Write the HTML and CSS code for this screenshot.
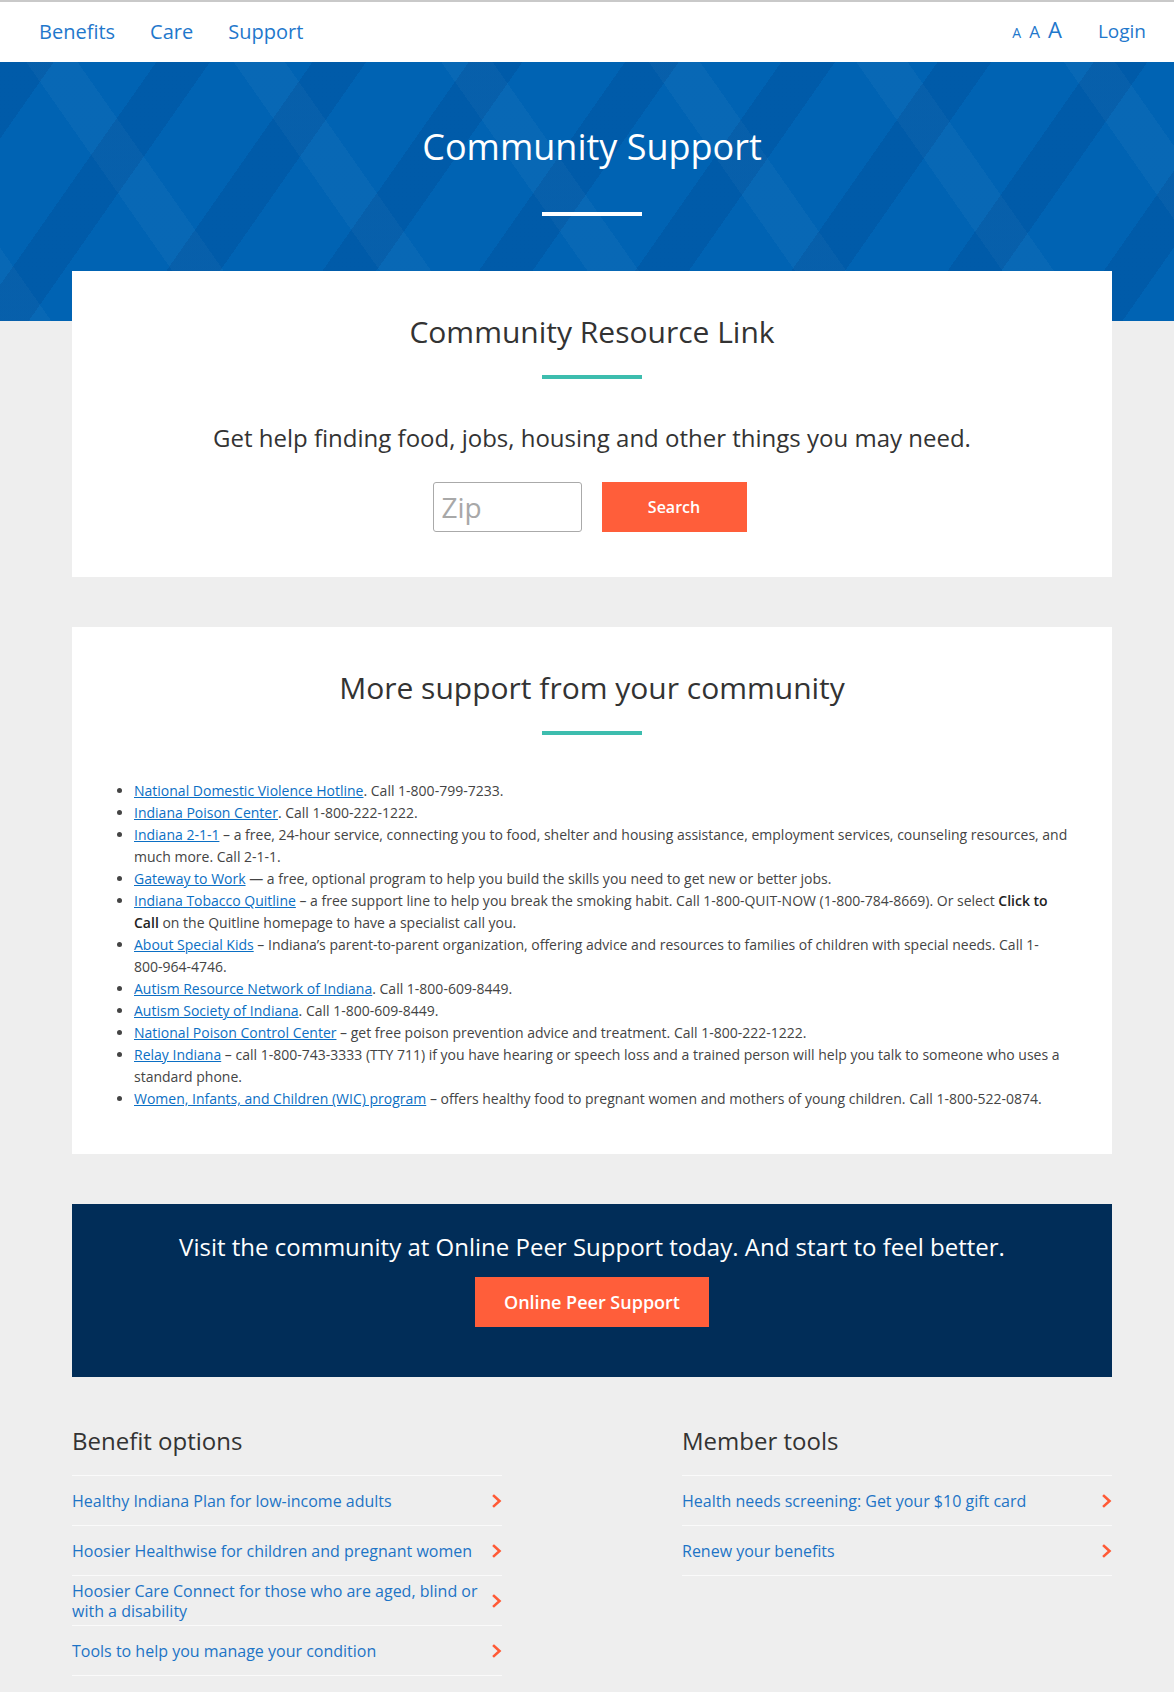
FILE: index.html
```html
<!DOCTYPE html>
<html lang="en">
<head>
<meta charset="utf-8">
<title>Community Support</title>
<link rel="stylesheet" href="styles.css">
</head>
<body>
<header class="topbar">
  <nav class="mainnav">
    <a href="#">Benefits</a>
    <a href="#">Care</a>
    <a href="#">Support</a>
  </nav>
  <div class="util">
    <span class="sizes">
      <a href="#" class="sz sz1">A</a>
      <a href="#" class="sz sz2">A</a>
      <a href="#" class="sz sz3">A</a>
    </span>
    <a href="#" class="login">Login</a>
  </div>
</header>

<section class="hero">
  <div class="wrap hero-inner">
    <h1>Community Support</h1>
    <div class="rule rule-white"></div>
  </div>
</section>

<main class="wrap">
  <section class="card card-first">
    <h2>Community Resource Link</h2>
    <div class="rule rule-teal"></div>
    <p class="lead">Get help finding food, jobs, housing and other things you may need.</p>
    <form class="search">
      <input type="text" class="zip" placeholder="Zip">
      <button type="button" class="btn btn-search">Search</button>
    </form>
  </section>

  <section class="card card-list">
    <h2>More support from your community</h2>
    <div class="rule rule-teal"></div>
    <ul class="resources">
      <li><a href="#">National Domestic Violence Hotline</a>. Call 1-800-799-7233.</li>
      <li><a href="#">Indiana Poison Center</a>. Call 1-800-222-1222.</li>
      <li><a href="#">Indiana 2-1-1</a> – a free, 24-hour service, connecting you to food, shelter and housing assistance, employment services, counseling resources, and much more. Call 2-1-1.</li>
      <li><a href="#">Gateway to Work</a> — a free, optional program to help you build the skills you need to get new or better jobs.</li>
      <li><a href="#">Indiana Tobacco Quitline</a> – a free support line to help you break the smoking habit. Call 1-800-QUIT-NOW (1-800-784-8669). Or select <strong>Click to Call</strong> on the Quitline homepage to have a specialist call you.</li>
      <li><a href="#">About Special Kids</a> – Indiana’s parent-to-parent organization, offering advice and resources to families of children with special needs. Call 1-<wbr><span class="nowrap">800-964-4746.</span></li>
      <li><a href="#">Autism Resource Network of Indiana</a>. Call 1-800-609-8449.</li>
      <li><a href="#">Autism Society of Indiana</a>. Call 1-800-609-8449.</li>
      <li><a href="#">National Poison Control Center</a> – get free poison prevention advice and treatment. Call 1-800-222-1222.</li>
      <li><a href="#">Relay Indiana</a> – call 1-800-743-3333 (TTY 711) if you have hearing or speech loss and a trained person will help you talk to someone who uses a standard phone.</li>
      <li><a href="#">Women, Infants, and Children (WIC) program</a> – offers healthy food to pregnant women and mothers of young children. Call 1-800-522-0874.</li>
    </ul>
  </section>

  <section class="promo">
    <h3>Visit the community at Online Peer Support today. And start to feel better.</h3>
    <a href="#" class="btn btn-promo">Online Peer Support</a>
  </section>

  <section class="linkcols">
    <div class="col">
      <h3>Benefit options</h3>
      <ul class="linklist">
        <li><a href="#"><span>Healthy Indiana Plan for low-income adults</span><svg class="chev" viewBox="0 0 10 14" width="10" height="14"><path d="M2 2 L7.5 7 L2 12"/></svg></a></li>
        <li><a href="#"><span>Hoosier Healthwise for children and pregnant women</span><svg class="chev" viewBox="0 0 10 14" width="10" height="14"><path d="M2 2 L7.5 7 L2 12"/></svg></a></li>
        <li><a href="#"><span>Hoosier Care Connect for those who are aged, blind or with a disability</span><svg class="chev" viewBox="0 0 10 14" width="10" height="14"><path d="M2 2 L7.5 7 L2 12"/></svg></a></li>
        <li><a href="#"><span>Tools to help you manage your condition</span><svg class="chev" viewBox="0 0 10 14" width="10" height="14"><path d="M2 2 L7.5 7 L2 12"/></svg></a></li>
      </ul>
    </div>
    <div class="col">
      <h3>Member tools</h3>
      <ul class="linklist">
        <li><a href="#"><span>Health needs screening: Get your $10 gift card</span><svg class="chev" viewBox="0 0 10 14" width="10" height="14"><path d="M2 2 L7.5 7 L2 12"/></svg></a></li>
        <li><a href="#"><span>Renew your benefits</span><svg class="chev" viewBox="0 0 10 14" width="10" height="14"><path d="M2 2 L7.5 7 L2 12"/></svg></a></li>
      </ul>
    </div>
  </section>
</main>
</body>
</html>
```

FILE: styles.css
```css
* { box-sizing: border-box; }

body {
  margin: 0;
  background: #eeeeee;
  font-family: "Open Sans", "Noto Sans", Arial, sans-serif;
  color: #333;
}

a { color: #0b6fc4; }

.wrap {
  width: 1040px;
  margin: 0 62px 0 72px;
}

.nowrap { white-space: nowrap; }

/* ---------- top bar ---------- */
.topbar {
  height: 62px;
  background: #fff;
  border-top: 2px solid #c9c9c9;
  display: flex;
  align-items: center;
  justify-content: space-between;
  padding: 0 28px 2px 39px;
}

.mainnav {
  display: flex;
  gap: 35px;
}

.mainnav a,
.util a {
  text-decoration: none;
  color: #1f78cc;
  font-size: 20px;
  line-height: 27px;
}

.util {
  display: flex;
  align-items: baseline;
  gap: 36px;
}

.sizes {
  display: flex;
  align-items: baseline;
  gap: 8px;
}

.util .sz1 { font-size: 14px; }
.util .sz2 { font-size: 17px; }
.util .sz3 { font-size: 22px; }
.util .login { font-size: 19px; }

/* ---------- hero ---------- */
.hero {
  height: 259px;
  background-color: #0063b3;
  background-image:
    repeating-linear-gradient(125deg, rgba(0, 20, 80, 0.10) 0 44px, rgba(0, 0, 0, 0) 44px 128px),
    repeating-linear-gradient(55deg, rgba(255, 255, 255, 0.03) 0 42px, rgba(0, 0, 0, 0) 42px 170px);
  padding-top: 60px;
}

.hero-inner {
  text-align: center;
}

.hero h1 {
  margin: 0;
  font-size: 36px;
  line-height: 49px;
  font-weight: 400;
  color: #fff;
}

.rule {
  width: 100px;
  height: 4px;
  margin: 0 auto;
}

.rule-white {
  background: #fff;
  margin-top: 41px;
}

.rule-teal {
  background: #3dbdae;
  margin-top: 23px;
}

/* ---------- cards ---------- */
.card {
  background: #fff;
  text-align: center;
  padding: 40px 40px 45px;
}

.card-first {
  margin-top: -50px;
}

.card-list {
  margin-top: 50px;
  padding-bottom: 44px;
}

.card h2 {
  margin: 0;
  font-size: 30px;
  line-height: 41px;
  font-weight: 400;
  color: #333;
}

.lead {
  margin: 42px 0 0;
  font-size: 24px;
  line-height: 33px;
  color: #333;
}

.search {
  margin-top: 28px;
  display: flex;
  justify-content: center;
  gap: 20px;
  padding-right: 5px;
}

.zip {
  width: 149px;
  height: 50px;
  border: 1px solid #aaaaaa;
  border-radius: 3px;
  padding: 0 8px;
  font-family: inherit;
  font-size: 28px;
  color: #333;
  background: #fff;
}

.zip::placeholder { color: #a8a8a8; }

.btn {
  display: inline-flex;
  align-items: center;
  justify-content: center;
  height: 50px;
  background: #ff5e3a;
  color: #fff;
  border: 0;
  font-family: inherit;
  font-weight: 600;
  text-decoration: none;
}

.btn-search {
  width: 145px;
  font-size: 16px;
}

/* ---------- resource list ---------- */
.resources {
  text-align: left;
  margin: 45px 0 0;
  padding: 0 0 0 22px;
  font-size: 14px;
  line-height: 22px;
  color: #444;
}

.resources a { color: #0b6fc4; }
.resources strong { color: #222; font-weight: 600; }

/* ---------- promo ---------- */
.promo {
  margin-top: 50px;
  background: #012d58;
  text-align: center;
  padding: 27px 0 50px;
}

.promo h3 {
  margin: 0 0 14px;
  font-size: 24px;
  line-height: 32px;
  font-weight: 400;
  color: #fff;
}

.btn-promo {
  padding: 0 29px;
  font-size: 18px;
}

/* ---------- bottom link columns ---------- */
.linkcols {
  display: grid;
  grid-template-columns: 430px 430px;
  column-gap: 180px;
  padding-top: 48px;
  padding-bottom: 16px;
}

.col h3 {
  margin: 0 0 18px;
  font-size: 24px;
  line-height: 32px;
  font-weight: 400;
  color: #333;
}

.linklist {
  list-style: none;
  margin: 0;
  padding: 0;
  border-bottom: 1px solid #fafafa;
}

.linklist li {
  border-top: 1px solid #fafafa;
}

.linklist a {
  display: flex;
  align-items: center;
  justify-content: space-between;
  min-height: 49px;
  gap: 6px;
  text-decoration: none;
  color: #1d74c6;
  font-size: 16px;
  line-height: 20px;
}

.chev {
  flex: none;
  fill: none;
  stroke: #ff5a36;
  stroke-width: 2.6;
  stroke-linecap: square;
}
```
